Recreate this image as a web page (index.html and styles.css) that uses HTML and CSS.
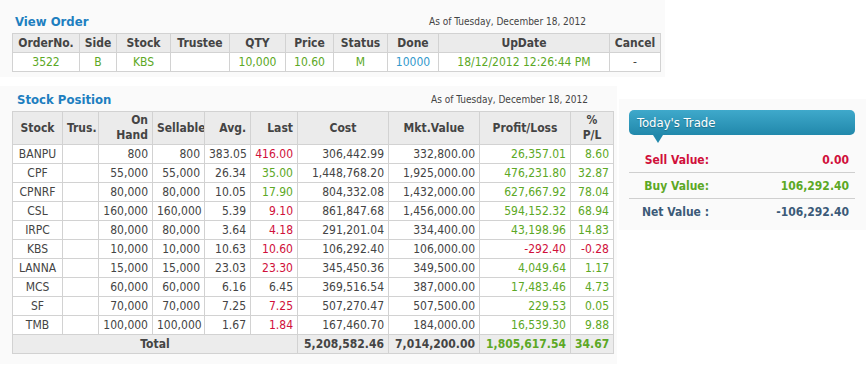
FILE: index.html
```html
<!DOCTYPE html>
<html lang="en">
<head>
    <meta charset="UTF-8">
    <title>Portfolio</title>
    <link rel="stylesheet" href="styles.css">
</head>
<body>
    <div class="panel order-panel">
        <div class="panel-head">
            <h2>View Order</h2>
            <span class="asof order-asof">As of Tuesday, December 18, 2012</span>
        </div>
        <table class="grid order-grid">
            <colgroup>
                <col style="width:67px"><col style="width:37px"><col style="width:54px"><col style="width:59px"><col style="width:56px">
                <col style="width:48px"><col style="width:54px"><col style="width:51px"><col style="width:171px"><col style="width:51px">
            </colgroup>
            <tr>
                <th>OrderNo.</th><th>Side</th><th>Stock</th><th>Trustee</th><th>QTY</th>
                <th>Price</th><th>Status</th><th>Done</th><th>UpDate</th><th>Cancel</th>
            </tr>
            <tr>
                <td class="up">3522</td><td class="up">B</td><td class="up">KBS</td><td></td><td class="up">10,000</td>
                <td class="up">10.60</td><td class="up">M</td><td class="blue">10000</td><td class="up">18/12/2012 12:26:44 PM</td><td>-</td>
            </tr>
        </table>
    </div>

    <div class="lower">
        <div class="panel stock-panel">
            <div class="panel-head">
                <h2>Stock Position</h2>
                <span class="asof stock-asof">As of Tuesday, December 18, 2012</span>
            </div>
            <table class="grid stock-grid">
                <colgroup>
                    <col style="width:50px"><col style="width:36px"><col style="width:54px"><col style="width:52px"><col style="width:46px">
                    <col style="width:47px"><col style="width:91px"><col style="width:91px"><col style="width:91px"><col style="width:43px">
                </colgroup>
                <tr class="head">
                    <th>Stock</th><th>Trus.</th><th class="r">On<br>Hand</th><th>Sellable</th><th class="r">Avg.</th>
                    <th class="r">Last</th><th>Cost</th><th>Mkt.Value</th><th>Profit/Loss</th><th>%<br>P/L</th>
                </tr>
                <tr><td class="c">BANPU</td><td></td><td>800</td><td>800</td><td>383.05</td><td class="down">416.00</td><td>306,442.99</td><td>332,800.00</td><td class="up">26,357.01</td><td class="up">8.60</td></tr>
                <tr><td class="c">CPF</td><td></td><td>55,000</td><td>55,000</td><td>26.34</td><td class="up">35.00</td><td>1,448,768.20</td><td>1,925,000.00</td><td class="up">476,231.80</td><td class="up">32.87</td></tr>
                <tr><td class="c">CPNRF</td><td></td><td>80,000</td><td>80,000</td><td>10.05</td><td class="up">17.90</td><td>804,332.08</td><td>1,432,000.00</td><td class="up">627,667.92</td><td class="up">78.04</td></tr>
                <tr><td class="c">CSL</td><td></td><td>160,000</td><td>160,000</td><td>5.39</td><td class="down">9.10</td><td>861,847.68</td><td>1,456,000.00</td><td class="up">594,152.32</td><td class="up">68.94</td></tr>
                <tr><td class="c">IRPC</td><td></td><td>80,000</td><td>80,000</td><td>3.64</td><td class="down">4.18</td><td>291,201.04</td><td>334,400.00</td><td class="up">43,198.96</td><td class="up">14.83</td></tr>
                <tr><td class="c">KBS</td><td></td><td>10,000</td><td>10,000</td><td>10.63</td><td class="down">10.60</td><td>106,292.40</td><td>106,000.00</td><td class="down">-292.40</td><td class="down">-0.28</td></tr>
                <tr><td class="c">LANNA</td><td></td><td>15,000</td><td>15,000</td><td>23.03</td><td class="down">23.30</td><td>345,450.36</td><td>349,500.00</td><td class="up">4,049.64</td><td class="up">1.17</td></tr>
                <tr><td class="c">MCS</td><td></td><td>60,000</td><td>60,000</td><td>6.16</td><td>6.45</td><td>369,516.54</td><td>387,000.00</td><td class="up">17,483.46</td><td class="up">4.73</td></tr>
                <tr><td class="c">SF</td><td></td><td>70,000</td><td>70,000</td><td>7.25</td><td class="down">7.25</td><td>507,270.47</td><td>507,500.00</td><td class="up">229.53</td><td class="up">0.05</td></tr>
                <tr><td class="c">TMB</td><td></td><td>100,000</td><td>100,000</td><td>1.67</td><td class="down">1.84</td><td>167,460.70</td><td>184,000.00</td><td class="up">16,539.30</td><td class="up">9.88</td></tr>
                <tr class="total">
                    <td colspan="6" class="c">Total</td><td>5,208,582.46</td><td>7,014,200.00</td><td class="up">1,805,617.54</td><td class="up">34.67</td>
                </tr>
            </table>
        </div>

        <div class="panel trade-panel">
            <div class="trade-title">Today's Trade</div>
            <div class="trade-rows">
                <div class="trade-row sell"><span class="label">Sell Value:</span><span class="value">0.00</span></div>
                <div class="trade-row buy"><span class="label">Buy Value:</span><span class="value">106,292.40</span></div>
                <div class="trade-row net"><span class="label">Net Value :</span><span class="value">-106,292.40</span></div>
            </div>
        </div>
    </div>
</body>
</html>
```

FILE: styles.css
```css
* {
    margin: 0;
    padding: 0;
    box-sizing: border-box;
}

body {
    font-family: "DejaVu Sans Condensed", "DejaVu Sans", Tahoma, sans-serif;
    font-stretch: condensed;
    font-size: 12px;
    color: #444;
    background: #fff;
}

.panel {
    background: #fafafa;
}

.order-panel {
    width: 665px;
    padding: 10px 5px 5px 12px;
}

.panel-head {
    display: flex;
    justify-content: space-between;
    align-items: center;
    height: 23px;
}

h2 {
    font-size: 13px;
    font-weight: bold;
    color: #1e7fc0;
    padding-left: 3px;
}

.stock-panel h2 {
    padding-left: 5px;
}

.asof {
    font-size: 10px;
    color: #444;
}

.order-asof {
    margin-right: 74px;
}

.stock-asof {
    margin-right: 25px;
}

.grid {
    border-collapse: collapse;
    table-layout: fixed;
    background: #fff;
}

.order-grid {
    width: 648px;
}

.stock-grid {
    width: 601px;
}

.grid th,
.grid td {
    border: 1px solid #d2d2d2;
    height: 19px;
    padding: 0 4px;
    white-space: nowrap;
    overflow: hidden;
    line-height: 16px;
}

.grid th {
    background: #ebebeb;
    font-weight: bold;
    color: #444;
    text-align: center;
}

.order-grid td {
    text-align: center;
}

.stock-grid .head th {
    height: 33px;
    line-height: 15px;
}

.stock-grid td {
    text-align: right;
}

.stock-grid th.r {
    text-align: right;
}

.stock-grid td.c {
    text-align: center;
}

.total td {
    background: #ececec;
    font-weight: bold;
}

.up {
    color: #5ca825;
}

.down {
    color: #d0103a;
}

.blue {
    color: #3399cc;
}

.lower {
    display: flex;
    align-items: flex-start;
    margin-top: 9px;
}

.stock-panel {
    width: 617px;
    padding: 2px 4px 10px 12px;
}

.trade-panel {
    width: 247px;
    margin-left: 2px;
    margin-top: 13px;
    padding: 11px 11px 5px 10px;
}

.trade-title {
    position: relative;
    height: 25px;
    line-height: 25px;
    padding-left: 8px;
    font-size: 13px;
    color: #fff;
    text-shadow: 0 1px 1px rgba(0, 0, 0, 0.25);
    border-radius: 5px;
    background: linear-gradient(#3fa9cb, #2188ab);
}

.trade-title::after {
    content: "";
    position: absolute;
    left: 24px;
    top: 25px;
    border-left: 5px solid transparent;
    border-right: 5px solid transparent;
    border-top: 8px solid #2188ab;
}

.trade-rows {
    margin-top: 13px;
}

.trade-row {
    display: flex;
    justify-content: space-between;
    align-items: center;
    height: 26px;
    font-weight: bold;
    border-bottom: 1px solid #cfcfcf;
}

.trade-row:first-child {
    height: 25px;
}

.trade-row:last-child {
    border-bottom: none;
}

.trade-row .label {
    width: 80px;
    text-align: right;
}

.trade-row .value {
    padding-right: 6px;
}

.sell {
    color: #d0103a;
}

.buy {
    color: #5ca825;
}

.net {
    color: #3c5a78;
}
```
